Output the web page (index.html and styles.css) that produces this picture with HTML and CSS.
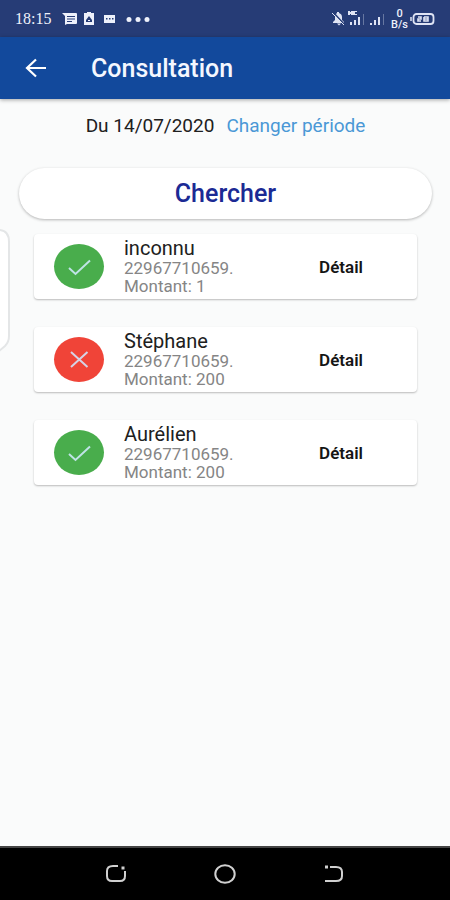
FILE: index.html
```html
<!DOCTYPE html>
<html lang="fr">
<head>
<meta charset="utf-8">
<meta name="viewport" content="width=device-width, initial-scale=1">
<title>Consultation</title>
<link rel="stylesheet" href="styles.css">
</head>
<body>
<div class="status">
  <div class="status-group">
    <time class="clock">18:15</time>
    <svg width="90" height="16" viewBox="0 0 90 16" fill="#eef1fb" aria-hidden="true">
      <path fill-rule="evenodd" d="M-1 2h14q1 0 1 1v9q0 1-1 1H4l-2 1V5zM4 5v1h8V5zM4 7.500v1h8v-1zM4 10v1h5v-1z"/>
      <path fill-rule="evenodd" d="M24 1h4v1h3v12H21V2h3zM26 5l-3 4v2h6V9zM25 9h2v1h-2z"/>
      <path fill-rule="evenodd" d="M41 4h11v8H41zM43 7v1.500h1.500V7zM46 7v1.500h1.500V7zM49 7v1.500h1.500V7z"/>
      <circle cx="66" cy="8.500" r="2.500"/><circle cx="75" cy="8.500" r="2.500"/><circle cx="84" cy="8.500" r="2.500"/>
    </svg>
  </div>
  <div class="status-group status-right">
    <svg width="56" height="20" viewBox="0 0 56 20" fill="#dfe4f4" aria-hidden="true">
      <path d="M0 14V13l2-2V8q0-3 2-4V3h2v1q3 1 3 4v3l2 2v1zM4 14.500h4l-2 2z"/>
      <path d="M0 3l11 12" stroke="#263c76" stroke-width="1.400"/>
      <path d="M-1 4l12 12" stroke="#dfe4f4" stroke-width="1"/>
      <path d="M15 2h2v1h1V2h2v4h-2V5h-1v1h-2zM20 2h4v1h-2v2h2v1h-4z"/>
      <path d="M17 13h2v3h-2zM21 11h2v5h-2zM25 8h2v8h-2zM37 14h2v2h-2zM41 11h2v5h-2zM45 8h2v8h-2z"/>
      <path d="M30 5h1v11h-1zM50 5h1v11h-1z" opacity=".35"/>
    </svg>
    <span class="speed"><span>0</span><span>B/s</span></span>
    <svg width="26" height="14" viewBox="0 0 26 14" fill="none" stroke="#dfe4f4" aria-hidden="true">
      <rect x="3.500" y="2" width="20" height="10" rx="3" stroke-width="1.800"/>
      <path d="M1 5v4" stroke-width="1.500"/>
      <path d="M8 5h3v2H8v2h3M14 5h4v4h-4V5M14 7h4" stroke-width="1.600"/>
    </svg>
  </div>
</div>

<header class="appbar">
  <button class="back" type="button" aria-label="Retour">
    <svg width="22" height="20" viewBox="0 0 22 20" fill="none" stroke="#fff" stroke-width="2.200" aria-hidden="true"><path d="M21 10H2M11 1.500L2 10l9 8.500"/></svg>
  </button>
  <h1>Consultation</h1>
</header>

<main>
  <p class="period"><span>Du 14/07/2020</span><a href="#periode">Changer période</a></p>
  <button class="search" type="button">Chercher</button>
  <ul class="list">
    <li class="card">
      <svg class="state" viewBox="0 0 50 45" aria-hidden="true"><ellipse cx="25" cy="22.500" rx="25" ry="22.500" fill="#49ad4c"/><path d="M15 24l6.500 6L36 16.500" fill="none" stroke="#bfe3e6" stroke-width="2"/></svg>
      <div class="info"><h2>inconnu</h2><p>22967710659.</p><p>Montant: 1</p></div>
      <button class="detail" type="button">Détail</button>
    </li>
    <li class="card">
      <svg class="state" viewBox="0 0 50 45" aria-hidden="true"><ellipse cx="25" cy="22.500" rx="25" ry="22.500" fill="#f04438"/><path d="M17 15l16.500 15M33.500 15L17 30" fill="none" stroke="#d5d3e6" stroke-width="2"/></svg>
      <div class="info"><h2>Stéphane</h2><p>22967710659.</p><p>Montant: 200</p></div>
      <button class="detail" type="button">Détail</button>
    </li>
    <li class="card">
      <svg class="state" viewBox="0 0 50 45" aria-hidden="true"><ellipse cx="25" cy="22.500" rx="25" ry="22.500" fill="#49ad4c"/><path d="M15 24l6.500 6L36 16.500" fill="none" stroke="#bfe3e6" stroke-width="2"/></svg>
      <div class="info"><h2>Aurélien</h2><p>22967710659.</p><p>Montant: 200</p></div>
      <button class="detail" type="button">Détail</button>
    </li>
  </ul>
  <svg class="edge-tab" width="14" height="128" viewBox="0 0 14 128" aria-hidden="true"><path d="M-2 2Q9 2 9 14V108Q9 114 5 118L-2 124" fill="#fff" stroke="#e4e6e7" stroke-width="2"/></svg>
</main>

<nav class="navbar">
  <button type="button" aria-label="Applications récentes"><svg width="22" height="20" viewBox="0 0 22 20" fill="none" stroke="#d0d0d0" stroke-width="2" aria-hidden="true"><path d="M13 2H8Q2 2 2 7v5q0 5 5 5h8q5 0 5-5V7"/><path d="M16.500 4h3" stroke-width="3"/></svg></button>
  <button type="button" aria-label="Accueil"><svg width="22" height="20" viewBox="0 0 22 20" fill="none" stroke="#d0d0d0" stroke-width="2" aria-hidden="true"><ellipse cx="11" cy="10" rx="9.700" ry="8.800"/></svg></button>
  <button type="button" aria-label="Précédent"><svg width="22" height="20" viewBox="0 0 22 20" fill="none" stroke="#d0d0d0" stroke-width="2" aria-hidden="true"><path d="M7 3h6q6 0 6 5v4q0 5-6 5H2"/><path d="M2 3h3" stroke-width="3"/></svg></button>
</nav>
</body>
</html>
```
FILE: styles.css
```css
* {
  box-sizing: border-box;
}

body {
  display: flex;
  flex-direction: column;
  min-height: 100vh;
  margin: 0;
  background: #fafbfb;
  color: #202020;
  font-family: Roboto, sans-serif;
}

h1, h2, p, ul {
  margin: 0;
  padding: 0;
}

button {
  padding: 0;
  border: 0;
  background: none;
  font-family: inherit;
  cursor: pointer;
}

svg {
  display: block;
  overflow: visible;
}

.status {
  display: flex;
  align-items: center;
  justify-content: space-between;
  height: 37px;
  padding: 0 14px 0 15px;
  background: #263c76;
  color: #eef1fb;
}

.status-group {
  display: flex;
  align-items: center;
  gap: 12px;
}

.status-right {
  gap: 2px;
}

.clock {
  font: 16px "Liberation Serif", serif;
}

.speed {
  display: flex;
  flex-direction: column;
  align-items: center;
  font-size: 11px;
  font-weight: 500;
  line-height: 11px;
}

.appbar {
  display: flex;
  align-items: center;
  gap: 44px;
  height: 62px;
  padding: 0 25px;
  background: #12499c;
  box-shadow: 0 1px 4px rgba(0, 0, 0, 0.35);
  color: #f4f7ff;
}

.appbar h1 {
  font-size: 25px;
  font-weight: 500;
}

main {
  position: relative;
  flex: 1;
  padding: 16px 18px 24px 19px;
}

.period {
  display: flex;
  justify-content: center;
  gap: 12px;
  font-size: 19px;
  line-height: 22px;
}

.period a {
  color: #4a98d6;
  text-decoration: none;
}

.search {
  display: block;
  width: 100%;
  height: 51px;
  margin-top: 31px;
  border-radius: 26px;
  background: #fff;
  box-shadow: 0 1px 3px rgba(0, 0, 0, 0.28);
  color: #1b2a94;
  font-size: 25px;
  font-weight: 500;
}

.list {
  display: flex;
  flex-direction: column;
  gap: 28px;
  margin: 15px 15px 0;
  list-style: none;
}

.card {
  display: flex;
  align-items: center;
  gap: 20px;
  padding: 4px 54px 4px 20px;
  border-radius: 4px;
  background: #fff;
  box-shadow: 0 1px 2px rgba(0, 0, 0, 0.26);
}

.state {
  flex: none;
  width: 50px;
  height: 45px;
}

.info {
  flex: 1;
  color: #858585;
  font-size: 17px;
  line-height: 18px;
}

.info h2 {
  color: #202020;
  font-size: 20px;
  font-weight: 400;
  line-height: 21px;
}

.detail {
  color: #151515;
  font-size: 17px;
  font-weight: 600;
}

.edge-tab {
  position: absolute;
  top: 129px;
  left: 0;
}

.navbar {
  display: flex;
  align-items: center;
  justify-content: center;
  gap: 87px;
  height: 54px;
  border-top: 2px solid #444;
  background: #000;
}
```
